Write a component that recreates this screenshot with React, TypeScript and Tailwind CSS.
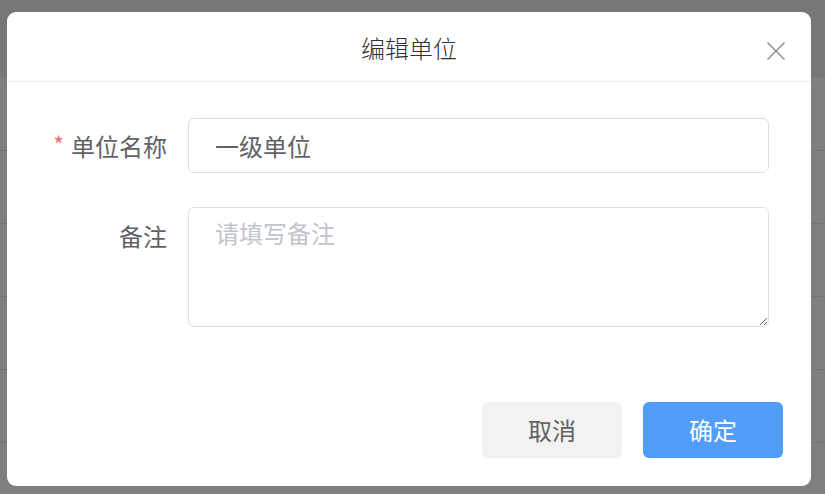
import React from 'react';

const font = { fontFamily: '"Noto Sans CJK SC", "Noto Sans", sans-serif' };

export default function App() {
  const rows = [0, 1, 2, 3, 4, 5];

  return (
    <div className="relative w-[825px] h-[494px] overflow-hidden bg-[#7f7f7f]" style={font}>
      {/* page underneath the mask */}
      <div className="flex flex-col">
        <div className="h-[78px] bg-[#777777]" />
        {rows.map((r) => (
          <div key={r} className="h-[73px] border-b border-[#737373]" />
        ))}
      </div>

      {/* dialog */}
      <div className="absolute left-[7px] top-[12px] w-[804px] h-[474px] bg-white rounded-[9px] flex flex-col">
        <div className="relative h-[70px] border-b border-[#ebebeb] flex items-center justify-center">
          <span className="text-[24px] leading-none text-[#303133] pt-[2px] font-light">编辑单位</span>
          <button className="absolute right-[25px] top-[29px] w-[20px] h-[20px] flex items-center justify-center">
            <svg width="20" height="20" viewBox="0 0 20 20" fill="none">
              <path d="M1.5 1.5 L18.5 18.5 M18.5 1.5 L1.5 18.5" stroke="#909399" strokeWidth="1.6" />
            </svg>
          </button>
        </div>

        <div className="flex flex-col gap-[34px] pt-[36px] pr-[42px]">
          <div className="flex">
            <label className="w-[181px] shrink-0 pr-[21px] h-[55px] flex items-center justify-end text-[24px] text-[#606266]">
              <span className="text-[#f56c6c] text-[23px] mr-[7px] mt-[-2px]">*</span>
              单位名称
            </label>
            <input
              defaultValue="一级单位"
              className="flex-1 h-[55px] rounded-[6px] border border-[#dcdfe6] pl-[26px] text-[24px] text-[#606266] outline-none"
              style={font}
            />
          </div>
          <div className="flex">
            <label className="w-[181px] shrink-0 pr-[21px] h-[58px] flex items-center justify-end text-[24px] text-[#606266]">
              备注
            </label>
            <textarea
              placeholder="请填写备注"
              className="flex-1 h-[120px] rounded-[6px] border border-[#dcdfe6] pl-[26px] pt-[9px] text-[24px] leading-[32px] text-[#606266] placeholder:text-[#c0c4cc] outline-none"
              style={font}
            />
          </div>
        </div>

        <div className="mt-auto flex justify-end gap-[21px] pr-[28px] pb-[28px]">
          <button className="w-[140px] h-[56px] rounded-[6px] bg-[#f2f2f2] text-[24px] text-[#606266]">取消</button>
          <button className="w-[140px] h-[56px] rounded-[6px] bg-[#529dfa] text-[24px] text-white">确定</button>
        </div>
      </div>
    </div>
  );
}
